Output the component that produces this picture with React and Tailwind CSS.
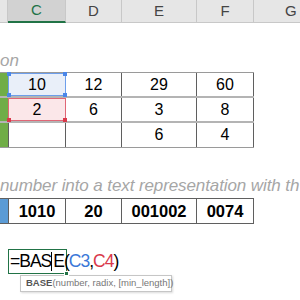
import React from 'react'

function Header() {
  return (
    <div className="flex h-[23px] text-[15px] text-[#444]">
      <div className="w-[8px] bg-[#e6e6e6] border-r border-b border-[#c8c8c8]" />
      <div className="w-[58px] bg-[#d2d2d2] border-r border-[#c8c8c8] border-b-2 border-b-[#217346] flex items-center justify-center text-[#217346]">C</div>
      <div className="w-[56px] bg-[#e6e6e6] border-r border-b border-[#c8c8c8] flex items-center justify-center">D</div>
      <div className="w-[75px] bg-[#e6e6e6] border-r border-b border-[#c8c8c8] flex items-center justify-center">E</div>
      <div className="w-[57px] bg-[#e6e6e6] border-r border-b border-[#c8c8c8] flex items-center justify-center">F</div>
      <div className="flex-1 bg-[#e6e6e6] border-b border-[#c8c8c8] flex items-center pl-[31px] whitespace-nowrap overflow-hidden">G</div>
    </div>
  )
}

function Corner({ className }) {
  return <span className={'absolute w-[4px] h-[4px] ' + className} />
}

function DataRow({ values, first, last }) {
  return (
    <div className={'flex h-[25px] ' + (last ? 'border-b border-[#9a9a9a]' : 'border-b-2 border-[#b4b4b4]')}>
      <div className="w-[8px] bg-[#70ad47]" />
      {first === 'blue' ? (
        <div className="relative w-[58px] bg-[#e9eff9] border border-[#6d9eeb] flex items-center justify-center">
          {values[0]}
          <Corner className="bg-[#4a86e8] -left-[2px] -top-[2px]" />
          <Corner className="bg-[#4a86e8] -right-[2px] -top-[2px]" />
          <Corner className="bg-[#4a86e8] -left-[2px] -bottom-[2px]" />
          <Corner className="bg-[#4a86e8] -right-[2px] -bottom-[2px]" />
        </div>
      ) : first === 'red' ? (
        <div className="relative w-[58px] bg-[#fbe7e9] border border-[#e06676] flex items-center justify-center">
          {values[0]}
          <Corner className="bg-[#d9394a] -left-[2px] -bottom-[2px]" />
          <Corner className="bg-[#d9394a] -right-[2px] -bottom-[2px]" />
        </div>
      ) : (
        <div className="w-[58px] border-x border-[#5f5f5f]" />
      )}
      <div className="w-[56px] border-r border-[#5f5f5f] flex items-center justify-center">{values[1]}</div>
      <div className="w-[75px] border-r border-[#5f5f5f] flex items-center justify-center">{values[2]}</div>
      <div className="w-[57px] border-r border-[#5f5f5f] flex items-center justify-center">{values[3]}</div>
    </div>
  )
}

export default function App() {
  return (
    <div className="w-[300px] h-[300px] overflow-hidden bg-white text-black" style={{ fontFamily: '"Liberation Sans", Arial, sans-serif' }}>
      <Header />
      <div className="h-[24px]" />
      <div className="h-[25px] flex items-end pb-[3px] text-[17px] italic text-[#a6a6a6] leading-none">on</div>

      <div className="w-[254px] border-t border-[#9a9a9a] text-[16px]">
        <DataRow values={['10', '12', '29', '60']} first="blue" />
        <DataRow values={['2', '6', '3', '8']} first="red" />
        <DataRow values={['', '', '6', '4']} last />
      </div>

      <div className="h-[25px]" />
      <div className="h-[25px] flex items-center whitespace-nowrap text-[17px] italic text-[#a6a6a6] tracking-[-0.1px]">
        number into a text representation with th
      </div>

      <div className="flex w-[254px] h-[26px] border-y border-[#5f5f5f] text-[16.5px] font-bold">
        <div className="w-[8px] bg-[#5b9bd5]" />
        <div className="w-[58px] border-x border-[#5f5f5f] flex items-center justify-center">1010</div>
        <div className="w-[56px] border-r border-[#5f5f5f] flex items-center justify-center">20</div>
        <div className="w-[75px] border-r border-[#5f5f5f] flex items-center justify-center">001002</div>
        <div className="w-[57px] border-r border-[#5f5f5f] flex items-center justify-center">0074</div>
      </div>

      <div className="h-[25px]" />
      <div className="flex">
        <div className="w-[8px]" />
        <div className="relative w-[59px] h-[25px] border-[1.5px] border-[#217346]">
          <span className="absolute -right-[3px] -bottom-[3px] w-[5px] h-[5px] bg-[#217346] border border-white" />
          <div className="absolute left-[1px] top-[1px] flex items-center whitespace-nowrap text-[17.5px] leading-[21px] tracking-[-1px]">
            <span>=BAS</span>
            <span className="inline-block w-px h-[19px] bg-black mr-[1px]" />
            <span>E(</span>
            <span className="text-[#3b78d8]">C3</span>
            <span>,</span>
            <span className="text-[#d9394a]">C4</span>
            <span>)</span>
          </div>
        </div>
      </div>
      <div className="flex mt-[1px]">
        <div className="w-[20px]" />
        <div className="h-[17px] w-[152px] pl-[5px] flex items-center border border-[#c6c6c6] bg-white shadow-[1px_1px_2px_rgba(0,0,0,0.15)] text-[9.5px] text-[#777] whitespace-nowrap">
          <span className="font-bold text-[#555]">BASE</span>(number, radix, [min_length])
        </div>
      </div>
    </div>
  )
}
